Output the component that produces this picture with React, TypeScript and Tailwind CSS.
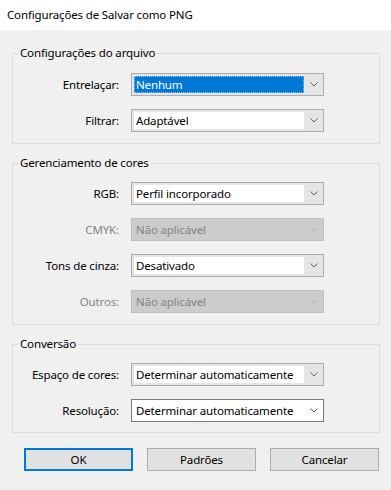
import React from 'react';

type State = 'normal' | 'focused' | 'disabled' | 'hover';

const Chevron = ({ color }: { color: string }) => (
  <svg width="8" height="5" viewBox="0 0 8 5" fill="none">
    <polyline points="0.5,0.5 4,4 7.5,0.5" stroke={color} strokeWidth="1" />
  </svg>
);

const Select = ({ value, state = 'normal' }: { value: string; state?: State }) => {
  const disabled = state === 'disabled';
  const focused = state === 'focused';
  const hover = state === 'hover';
  return (
    <div
      className={`flex h-[23px] w-[193px] border pl-[2px] py-[2px] ${
        disabled
          ? 'border-[#bfbfbf] bg-[#cccccc]'
          : hover
          ? 'border-[#7a7a7a] bg-white'
          : 'border-[#acacac] bg-[#e5e5e5]'
      }`}
    >
      <div
        className={`flex min-w-0 flex-1 items-center overflow-hidden whitespace-nowrap pl-[2px] ${
          focused
            ? 'bg-[#0078d7] text-white outline outline-1 outline-dotted outline-offset-[-1px] outline-[#9cc7ef]'
            : disabled
            ? 'bg-[#cccccc] text-[#838383]'
            : 'bg-white text-black'
        }`}
      >
        {value}
      </div>
      <div className="flex w-[19px] items-center justify-center">
        <Chevron color={disabled ? '#b5b5b5' : '#606060'} />
      </div>
    </div>
  );
};

const Row = ({ label, value, state }: { label: string; value: string; state?: State }) => (
  <div className="flex items-center">
    <div
      className={`w-[107px] whitespace-nowrap pr-[1px] text-right ${
        state === 'disabled' ? 'text-[#838383]' : 'text-black'
      }`}
    >
      {label}
    </div>
    <div className="ml-[11px]">
      <Select value={value} state={state} />
    </div>
  </div>
);

const Group = ({ title, top, children }: { title: string; top: string; children: React.ReactNode }) => (
  <fieldset className={`mr-[11px] ml-[12px] border border-[#dcdcdc] ${top}`}>
    <legend className="ml-[5px] px-[2px] leading-[16px] text-black">{title}</legend>
    {children}
  </fieldset>
);

const Button = ({ label, primary }: { label: string; primary?: boolean }) => (
  <button
    className={`flex h-[23px] w-[109px] items-center justify-center bg-[#e1e1e1] text-black ${
      primary ? 'border-2 border-[#0078d7]' : 'border border-[#adadad]'
    }`}
  >
    {label}
  </button>
);

export default function App() {
  return (
    <div className="flex h-[490px] w-[391px] flex-col font-['Segoe_UI','Noto_Sans',sans-serif] text-[11.5px] leading-[16px] tracking-[-0.15px]">
      <div className="flex h-[30px] items-center whitespace-nowrap bg-white pl-[7px] text-black">
        Configurações de Salvar como PNG
      </div>
      <div className="flex flex-1 flex-col bg-[#f0f0f0] pt-[15px]">
        <Group title="Configurações do arquivo" top="">
          <div className="flex flex-col gap-[13px] pt-[12px] pb-[11px]">
            <Row label="Entrelaçar:" value="Nenhum" state="focused" />
            <Row label="Filtrar:" value="Adaptável" />
          </div>
        </Group>
        <Group title="Gerenciamento de cores" top="mt-[11px]">
          <div className="flex flex-col gap-[13px] pt-[11px] pb-[11px]">
            <Row label="RGB:" value="Perfil incorporado" />
            <Row label="CMYK:" value="Não aplicável" state="disabled" />
            <Row label="Tons de cinza:" value="Desativado" />
            <Row label="Outros:" value="Não aplicável" state="disabled" />
          </div>
        </Group>
        <Group title="Conversão" top="mt-[11px]">
          <div className="flex flex-col gap-[13px] pt-[11px] pb-[10px]">
            <Row label="Espaço de cores:" value="Determinar automaticamente" />
            <Row label="Resolução:" value="Determinar automaticamente" state="hover" />
          </div>
        </Group>
        <div className="mt-[15px] flex gap-[14px] pl-[24px]">
          <Button label="OK" primary />
          <Button label="Padrões" />
          <Button label="Cancelar" />
        </div>
      </div>
    </div>
  );
}
